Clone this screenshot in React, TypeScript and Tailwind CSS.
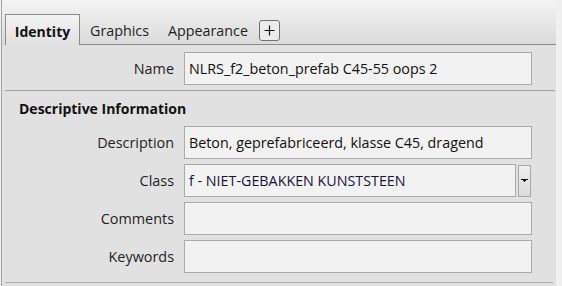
import React from 'react'

const FONT = { fontFamily: '"Open Sans", "Noto Sans", sans-serif' }

function Field({ label, value }: { label: string; value?: string }) {
  return (
    <div className="flex items-center h-[33px]">
      <div className="w-[172px] text-right text-[14.4px] text-[#1e1e1e]">{label}</div>
      <div className="ml-[10px] w-[348px] h-[33px] border border-[#ababab] bg-[#f2f2f2] flex items-center pl-[4px] text-[14.3px] text-[#111]">
        {value}
      </div>
    </div>
  )
}

export default function App() {
  return (
    <div className="w-[562px] h-[286px] flex bg-[#f0f0f0] overflow-hidden" style={FONT}>
      <div className="w-[555px] h-full ml-px border-l border-[#a3a3a3] flex flex-col bg-[#e1e1e1]">
        {/* tab bar */}
        <div className="h-[45px] flex items-end bg-gradient-to-b from-[#f4f4f4] to-[#dadada] pl-[3px]">
          <div className="w-[75px] h-[31px] pt-[3px] border border-b-0 border-[#8c8c8c] bg-gradient-to-b from-[#f3f3f3] to-[#e1e1e1] flex items-center justify-center font-bold text-[14px] text-[#111]">
            Identity
          </div>
          <div className="flex-1 h-[31px] pt-[3px] border-b border-[#8c8c8c] flex items-center text-[14.3px] text-[#1e1e1e]">
            <span className="ml-[10px]">Graphics</span>
            <span className="ml-[19px]">Appearance</span>
            <div className="ml-[11px] w-[21px] h-[21px] rounded-[3px] border border-[#707070] bg-[#ececec] flex items-center justify-center">
              <svg width="11" height="11" viewBox="0 0 11 11">
                <path d="M5.5 0.5v10M0.5 5.5h10" stroke="#111" strokeWidth="1.2" />
              </svg>
            </div>
          </div>
        </div>

        {/* name */}
        <div className="mt-[7px]">
          <Field label="Name" value="NLRS_f2_beton_prefab C45-55 oops 2" />
        </div>
        <div className="mt-[5px] ml-[3px] mr-px h-px bg-[#a0a0a0]" />

        <div className="mt-[8px] ml-[17px] leading-[20px] font-bold text-[14px] text-[#111]">Descriptive Information</div>

        <div className="mt-[7px] flex flex-col gap-[5px]">
          <Field label="Description" value="Beton, geprefabriceerd, klasse C45, dragend" />
          <div className="flex items-center h-[33px]">
            <div className="w-[172px] text-right text-[14.4px] text-[#1e1e1e]">Class</div>
            <div className="ml-[10px] w-[332px] h-[33px] border border-[#ababab] bg-[#f2f2f2] flex items-center pl-[4px] text-[14.3px] text-[#1a1240]">
              f - NIET-GEBAKKEN KUNSTSTEEN
            </div>
            <div className="ml-[2px] w-[13px] h-[32px] border border-[#a8a8a8] bg-gradient-to-b from-[#efefef] to-[#dcdcdc] flex items-center justify-center">
              <svg width="7" height="4" viewBox="0 0 7 4">
                <path d="M0 0h7v1H0zM2 1h3v1H2zM3 2h1v1H3z" fill="#111" />
              </svg>
            </div>
          </div>
          <Field label="Comments" />
          <Field label="Keywords" />
        </div>
        <div className="mt-[9px] ml-[3px] mr-[3px] h-px bg-[#b0b0b0]" />
      </div>
    </div>
  )
}
